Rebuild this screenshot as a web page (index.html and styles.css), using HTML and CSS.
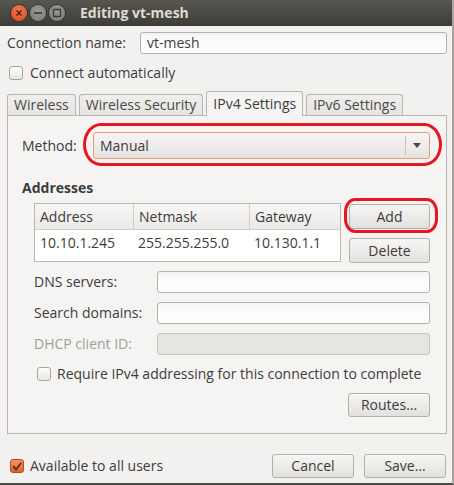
FILE: index.html
```html
<!DOCTYPE html>
<html>
<head>
<meta charset="utf-8">
<link rel="stylesheet" href="styles.css">
</head>
<body>
<div class="window">
  <header class="titlebar">
    <div class="controls">
      <span class="wbtn close"><svg width="16" height="16" viewBox="0 0 16 16"><path d="M5.5 5.5 L10.5 10.5 M10.5 5.5 L5.5 10.5" stroke="#3a2418" stroke-width="1.4" fill="none"/></svg></span>
      <span class="wbtn"><svg width="16" height="16" viewBox="0 0 16 16"><path d="M4 8 H12" stroke="#3a3935" stroke-width="1.6" fill="none"/></svg></span>
      <span class="wbtn"><svg width="16" height="16" viewBox="0 0 16 16"><rect x="4.5" y="4.5" width="7" height="7" rx="0.5" stroke="#3a3935" stroke-width="1.3" fill="none"/></svg></span>
    </div>
    <span class="title">Editing vt-mesh</span>
  </header>

  <main class="content">
    <div class="name-row">
      <span class="name-label">Connection name:</span>
      <div class="entry">vt-mesh</div>
    </div>

    <div class="check-row auto-row">
      <span class="checkbox"></span>
      <span>Connect automatically</span>
    </div>

    <div class="tabs">
      <div class="tab">Wireless</div>
      <div class="tab">Wireless Security</div>
      <div class="tab active">IPv4 Settings</div>
      <div class="tab">IPv6 Settings</div>
    </div>

    <section class="panel">
      <div class="method-row">
        <span class="method-label">Method:</span>
        <div class="combo">
          <span class="combo-text">Manual</span>
          <span class="combo-sep"></span>
          <span class="combo-arrow"></span>
          <span class="mark mark-method"></span>
        </div>
      </div>

      <h3 class="heading">Addresses</h3>

      <div class="addresses">
        <div class="table">
          <div class="trow thead">
            <div class="cell c1">Address</div>
            <div class="cell c2">Netmask</div>
            <div class="cell c3">Gateway</div>
          </div>
          <div class="trow">
            <div class="cell c1">10.10.1.245</div>
            <div class="cell c2">255.255.255.0</div>
            <div class="cell c3">10.130.1.1</div>
          </div>
        </div>
        <div class="side-buttons">
          <div class="button add">Add<span class="mark mark-add"></span></div>
          <div class="button">Delete</div>
        </div>
      </div>

      <div class="field-row">
        <span class="field-label">DNS servers:</span>
        <div class="entry"></div>
      </div>
      <div class="field-row">
        <span class="field-label">Search domains:</span>
        <div class="entry"></div>
      </div>
      <div class="field-row disabled">
        <span class="field-label">DHCP client ID:</span>
        <div class="entry"></div>
      </div>

      <div class="check-row require-row">
        <span class="checkbox"></span>
        <span>Require IPv4 addressing for this connection to complete</span>
      </div>

      <div class="routes-row">
        <div class="button">Routes…</div>
      </div>
    </section>

    <footer class="footer">
      <div class="check-row avail-row">
        <span class="checkbox checked"><svg width="14" height="14" viewBox="0 0 14 14"><path d="M3 6.5 L6 10 L11.5 2.5" stroke="#4a3024" stroke-width="2" fill="none" stroke-linecap="round" stroke-linejoin="round"/></svg></span>
        <span>Available to all users</span>
      </div>
      <div class="footer-buttons">
        <div class="button">Cancel</div>
        <div class="button">Save…</div>
      </div>
    </footer>
  </main>
</div>
</body>
</html>
```

FILE: styles.css
```css
* { box-sizing: border-box; }

html, body {
  margin: 0;
  padding: 0;
}

body {
  width: 454px;
  height: 485px;
  overflow: hidden;
  background: #3c3b37;
  font-family: "Open Sans", "Noto Sans", sans-serif;
  font-size: 14px;
  line-height: 18px;
  color: #3c3c3c;
}

.window {
  width: 454px;
  height: 485px;
  background: #f2f1f0;
  border-right: 2px solid #a9a6a1;
  border-bottom: 2px solid #4e4c48;
  display: flex;
  flex-direction: column;
}

/* title bar */
.titlebar {
  height: 26px;
  flex: 0 0 26px;
  background: linear-gradient(#57564f, #3d3c38);
  display: flex;
  align-items: center;
  padding-left: 11px;
}

.controls {
  display: flex;
  gap: 3px;
}

.wbtn {
  width: 16px;
  height: 16px;
  border-radius: 50%;
  background: radial-gradient(circle at 50% 35%, #9a9893, #7b7974);
  box-shadow: 0 0 0 1px #35342f;
  display: flex;
}

.wbtn.close {
  background: radial-gradient(circle at 50% 35%, #f27a4e, #d8491a);
}

.title {
  margin-left: 15px;
  font-weight: bold;
  color: #dfdbd2;
  font-size: 14px;
}

/* main content */
.content {
  flex: 1;
  padding: 6px 5px 0 7px;
  display: flex;
  flex-direction: column;
}

.name-row {
  display: flex;
  align-items: center;
  height: 22px;
}

.name-label {
  flex: 0 0 133px;
}

.entry {
  flex: 1;
  height: 22px;
  border: 1px solid #b5b1ab;
  border-radius: 3px;
  background: linear-gradient(#f3f3f3, #fcfcfc 40%, #fdfdfd);
  padding: 0 6px;
  display: flex;
  align-items: center;
}

.check-row {
  display: flex;
  align-items: center;
  height: 14px;
}

.checkbox {
  flex: 0 0 14px;
  width: 14px;
  height: 14px;
  border: 1px solid #a8a49e;
  border-radius: 3px;
  background: linear-gradient(#fdfdfd, #e9e7e4);
  display: flex;
}

.checkbox.checked {
  background: linear-gradient(#f69365, #e4602a);
  border-color: #b44a1e;
}

.auto-row {
  margin-top: 12px;
  padding-left: 2px;
  gap: 7px;
}

/* tabs */
.tabs {
  margin-top: 11px;
  height: 24px;
  display: flex;
  align-items: flex-end;
  gap: 3px;
  position: relative;
  z-index: 1;
}

.tab {
  height: 21px;
  padding: 0 6px;
  border: 1px solid #b9b5b0;
  border-bottom: none;
  border-radius: 3px 3px 0 0;
  background: linear-gradient(#efeeec, #e7e5e2);
  display: flex;
  align-items: center;
  color: #4a4a4a;
}

.tab.active {
  height: 25px;
  margin-bottom: -1px;
  background: #f5f4f3;
  padding: 0 6px;
  color: #3c3c3c;
}

/* panel */
.panel {
  border: 1px solid #b9b5b0;
  background: #f5f4f3;
  padding: 16px 16px 16px 14px;
  display: flex;
  flex-direction: column;
}

.method-row {
  display: flex;
  align-items: center;
  height: 27px;
}

.method-label {
  flex: 0 0 71px;
}

.combo {
  flex: 1;
  height: 27px;
  border: 1px solid #e79a75;
  border-radius: 3px;
  background: linear-gradient(#f6f5f4, #e6e4e1);
  display: flex;
  align-items: center;
  position: relative;
  padding-left: 6px;
}

.combo-text {
  flex: 1;
}

.combo-sep {
  width: 1px;
  height: 19px;
  background: #c9c5bf;
  margin-right: 7px;
}

.combo-arrow {
  width: 0;
  height: 0;
  border-left: 4px solid transparent;
  border-right: 4px solid transparent;
  border-top: 5px solid #4c4b48;
  margin-right: 8px;
}

.mark {
  position: absolute;
  border: 3px solid #e8161e;
  pointer-events: none;
}

.mark-method {
  left: -11px;
  right: -13px;
  top: -10px;
  bottom: -8px;
  border-radius: 18px / 22px;
}

.heading {
  margin: 19px 0 0;
  font-size: 14px;
  font-weight: bold;
  line-height: 20px;
}

.addresses {
  margin-top: 5px;
  padding-left: 12px;
  display: flex;
  gap: 8px;
}

.table {
  width: 307px;
  height: 59px;
  border: 1px solid #bbb7b2;
  background: #ffffff;
}

.trow {
  display: flex;
  height: 26px;
}

.thead {
  background: linear-gradient(#f8f7f6, #ebe9e6);
  border-bottom: 1px solid #d0ccc7;
}

.cell {
  padding-left: 5px;
  display: flex;
  align-items: center;
}

.thead .cell + .cell {
  border-left: 1px solid #d0ccc7;
}

.c1 { width: 98px; }
.c2 { width: 116px; }
.c3 { flex: 1; }

.trow + .trow .cell { padding-top: 0; }

.side-buttons {
  flex: 1;
  display: flex;
  flex-direction: column;
  gap: 9px;
  padding-top: 1px;
}

.button {
  height: 25px;
  border: 1px solid #b3afa9;
  border-radius: 3px;
  background: linear-gradient(#f7f6f5, #e3e1de);
  display: flex;
  align-items: center;
  justify-content: center;
  color: #3c3c3c;
  position: relative;
}

.mark-add {
  left: -6px;
  right: -9px;
  top: -7px;
  bottom: -5px;
  border-radius: 11px / 14px;
}

.field-row {
  display: flex;
  align-items: center;
  height: 22px;
  padding-left: 12px;
  margin-top: 9px;
}

.addresses + .field-row {
  margin-top: 8px;
}

.field-label {
  flex: 0 0 123px;
}

.field-row.disabled .field-label {
  color: #a19e99;
}

.field-row.disabled .entry {
  background: #e7e5e2;
  border-color: #c8c4bf;
}

.require-row {
  margin-top: 12px;
  padding-left: 15px;
  gap: 6px;
}

.routes-row {
  margin-top: 12px;
  display: flex;
  justify-content: flex-end;
}

.routes-row .button {
  width: 82px;
  height: 24px;
}

/* footer */
.footer {
  margin-top: 20px;
  display: flex;
  align-items: center;
  justify-content: space-between;
  height: 24px;
}

.avail-row {
  padding-left: 3px;
  gap: 6px;
}

.footer-buttons {
  display: flex;
  gap: 10px;
  margin-right: 1px;
}

.footer-buttons .button {
  width: 82px;
  height: 24px;
}
```
